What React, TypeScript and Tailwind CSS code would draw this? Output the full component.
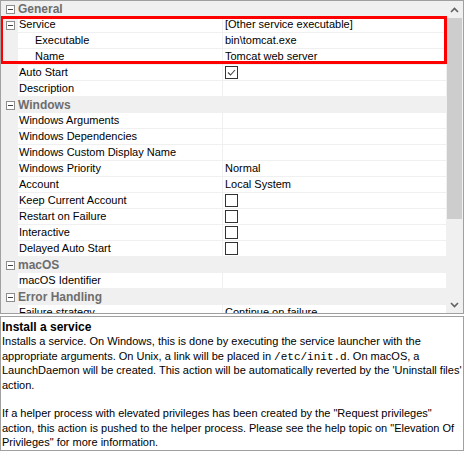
import React from "react";

type Row =
  | { kind: "cat"; label: string }
  | { kind: "prop"; label: string; value?: string; check?: boolean; indent?: boolean; expander?: boolean };

const rows: Row[] = [
  { kind: "cat", label: "General" },
  { kind: "prop", label: "Service", value: "[Other service executable]", expander: true },
  { kind: "prop", label: "Executable", value: "bin\\tomcat.exe", indent: true },
  { kind: "prop", label: "Name", value: "Tomcat web server", indent: true },
  { kind: "prop", label: "Auto Start", check: true },
  { kind: "prop", label: "Description" },
  { kind: "cat", label: "Windows" },
  { kind: "prop", label: "Windows Arguments" },
  { kind: "prop", label: "Windows Dependencies" },
  { kind: "prop", label: "Windows Custom Display Name" },
  { kind: "prop", label: "Windows Priority", value: "Normal" },
  { kind: "prop", label: "Account", value: "Local System" },
  { kind: "prop", label: "Keep Current Account", check: false },
  { kind: "prop", label: "Restart on Failure", check: false },
  { kind: "prop", label: "Interactive", check: false },
  { kind: "prop", label: "Delayed Auto Start", check: false },
  { kind: "cat", label: "macOS" },
  { kind: "prop", label: "macOS Identifier" },
  { kind: "cat", label: "Error Handling" },
  { kind: "prop", label: "Failure strategy", value: "Continue on failure" },
];

function Expander() {
  return (
    <div className="w-[9px] h-[9px] border border-[#8c8c8c] bg-white flex items-center justify-center">
      <div className="w-[5px] h-px bg-[#404040]" />
    </div>
  );
}

function CheckBox({ checked }: { checked: boolean }) {
  return (
    <div className="w-[13px] h-[13px] border border-[#333333] bg-white flex items-center justify-center">
      {checked && (
        <svg width="11" height="11" viewBox="0 0 11 11">
          <path d="M2 5.5 L4.5 8 L9 3" fill="none" stroke="#444" strokeWidth="1.1" />
        </svg>
      )}
    </div>
  );
}

export default function App() {
  return (
    <div
      className="w-[464px] h-[451px] bg-white text-black text-[11px]"
      style={{ fontFamily: '"Liberation Sans", Arial, sans-serif' }}
    >
      <div className="relative h-[314px] border border-[#a0a0a0] flex overflow-hidden">
        <div className="flex-1 flex flex-col overflow-hidden">
          {rows.map((r, i) =>
            r.kind === "cat" ? (
              <div key={i} className="h-[16px] shrink-0 flex items-center bg-[#f0f0f0]">
                <div className="w-[17px] flex items-center justify-center pl-[1px]">
                  <Expander />
                </div>
                <span className="font-bold text-[#6d6d6d] text-[12px]">{r.label}</span>
              </div>
            ) : (
              <div key={i} className="h-[16px] shrink-0 flex">
                <div className="w-[17px] bg-[#f0f0f0] flex items-center justify-center pl-[1px]">
                  {r.expander && <Expander />}
                </div>
                <div
                  className={`w-[205px] border-b border-r border-[#f0f0f0] flex items-center ${
                    r.indent ? "pl-[17px]" : "pl-[1px]"
                  } whitespace-nowrap overflow-hidden`}
                >
                  {r.label}
                </div>
                <div className="flex-1 border-b border-[#f0f0f0] flex items-center pl-[2px] whitespace-nowrap overflow-hidden">
                  {r.check !== undefined ? <CheckBox checked={r.check} /> : r.value}
                </div>
              </div>
            )
          )}
        </div>
        <div className="w-[17px] bg-[#f0f0f0] flex flex-col">
          <div className="h-[17px] flex items-center justify-center">
            <svg width="9" height="6" viewBox="0 0 9 6">
              <path d="M1 5 L4.5 1.5 L8 5" fill="none" stroke="#606060" strokeWidth="1.6" />
            </svg>
          </div>
          <div className="flex-1 px-[1px]">
            <div className="h-[201px] bg-[#cdcdcd]" />
          </div>
          <div className="h-[17px] flex items-center justify-center">
            <svg width="9" height="6" viewBox="0 0 9 6">
              <path d="M1 1 L4.5 4.5 L8 1" fill="none" stroke="#606060" strokeWidth="1.6" />
            </svg>
          </div>
        </div>
        <div className="absolute left-[-1px] top-[15px] w-[447px] h-[48px] border-[3px] border-[#ff0000] pointer-events-none" />
      </div>
      <div className="mt-[2px] h-[135px] border border-[#a0a0a0] px-[1px] pt-[3px] leading-[14.4px] overflow-hidden">
        <div className="font-bold text-[12px]">Install a service</div>
        <div>
          Installs a service. On Windows, this is done by executing the service launcher with the appropriate
          arguments. On Unix, a link will be placed in{" "}
          <span className="leading-none" style={{ fontFamily: '"Liberation Mono", monospace' }}>
            /etc/init.d
          </span>
          . On macOS, a LaunchDaemon will be created. This action will be automatically reverted by the 'Uninstall
          files' action.
        </div>
        <div className="h-[14.4px]" />
        <div>
          If a helper process with elevated privileges has been created by the "Request privileges" action, this
          action is pushed to the helper process. Please see the help topic on "Elevation Of Privileges" for more
          information.
        </div>
      </div>
    </div>
  );
}
